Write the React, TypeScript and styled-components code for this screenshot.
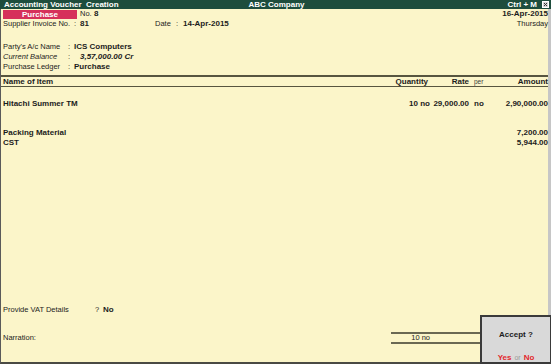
import styled, { createGlobalStyle } from 'styled-components';

const GlobalStyle = createGlobalStyle`
  html, body {
    margin: 0;
    padding: 0;
    background: #fbf5c9;
  }
  body {
    font-family: "Liberation Sans", Arial, sans-serif;
    font-size: 7.5px;
    color: #1c1c1c;
  }
`;

const Screen = styled.div`
  position: relative;
  width: 551px;
  height: 364px;
  display: flex;
  flex-direction: column;
  overflow: hidden;
  background: #fbf5c9;
`;

const TitleBar = styled.div`
  height: 9px;
  line-height: 9px;
  background: #1e4d3d;
  color: #ffffff;
  font-weight: bold;
  font-size: 8px;
  display: grid;
  grid-template-columns: 1fr auto 1fr;
  align-items: center;
  padding: 0 2px 0 4px;
  white-space: pre;
`;

const TitleRight = styled.div`
  justify-self: end;
  display: flex;
  align-items: center;
  gap: 5px;
`;

const Body = styled.div`
  flex: 1;
  display: flex;
  flex-direction: column;
  border-left: 1px solid #5a5a5a;
  border-right: 3px solid #c6c6c6;
  border-bottom: 2px solid #4a4a44;
`;

const Head = styled.div`
  display: flex;
  justify-content: space-between;
  padding-left: 2px;
  margin-bottom: 3px;
`;

const HeadLeft = styled.div`
  display: flex;
  flex-direction: column;
`;

const HeadRight = styled.div`
  display: flex;
  flex-direction: column;
  align-items: flex-end;
`;

const Row = styled.div<{ $top?: number }>`
  height: 10px;
  line-height: 10px;
  display: flex;
  align-items: center;
  margin-top: ${(p) => p.$top || 0}px;
  white-space: nowrap;
`;

const Badge = styled.div`
  width: 74px;
  height: 9px;
  line-height: 9px;
  background: #d6305b;
  color: #ffffff;
  font-weight: bold;
  font-size: 8px;
  text-align: center;
  margin-right: 3px;
`;

const Label = styled.span<{ $w?: number; $italic?: boolean }>`
  display: inline-block;
  width: ${(p) => (p.$w ? `${p.$w}px` : 'auto')};
  font-style: ${(p) => (p.$italic ? 'italic' : 'normal')};
`;

const Colon = styled.span<{ $w?: number }>`
  display: inline-block;
  width: ${(p) => p.$w || 6}px;
`;

const Strong = styled.span<{ $italic?: boolean; $indent?: number }>`
  font-weight: bold;
  font-size: 8px;
  font-style: ${(p) => (p.$italic ? 'italic' : 'normal')};
  margin-left: ${(p) => p.$indent || 0}px;
`;

const Block = styled.div<{ $w: number }>`
  width: ${(p) => p.$w}px;
  display: flex;
  align-items: center;
`;

const ItemGrid = styled.div`
  display: grid;
  grid-template-columns: 1fr 39px 39px 25px 54px;
  padding-left: 2px;
  height: 10px;
  line-height: 10px;
  align-items: center;
  white-space: nowrap;
`;

const HeaderGrid = styled(ItemGrid)`
  height: 9px;
  line-height: 9px;
  border-top: 2px solid #57553f;
  border-bottom: 1px solid #57553f;
  font-weight: bold;
  font-size: 8px;
`;

const ItemRow = styled(ItemGrid)<{ $top?: number }>`
  margin-top: ${(p) => p.$top || 0}px;
  font-weight: bold;
  font-size: 8px;
`;

const Cell = styled.div<{ $align?: 'left' | 'right'; $pad?: number }>`
  text-align: ${(p) => p.$align || 'left'};
  padding-right: ${(p) => p.$pad || 0}px;
`;

const PerCell = styled.div<{ $small?: boolean }>`
  padding-left: 5px;
  font-size: ${(p) => (p.$small ? '6.5px' : '8px')};
  font-weight: ${(p) => (p.$small ? 'normal' : 'bold')};
  color: ${(p) => (p.$small ? '#3a3a3a' : 'inherit')};
`;

const Spacer = styled.div`
  flex: 1;
`;

const Footer = styled.div`
  display: flex;
  flex-direction: column;
  padding-bottom: 18px;
`;

const VatRow = styled.div`
  height: 10px;
  line-height: 10px;
  padding-left: 2px;
  display: flex;
  align-items: center;
  margin-bottom: 17px;
`;

const NarrationGrid = styled(ItemGrid)`
  height: 12px;
  line-height: 12px;
`;

const TotalsBand = styled.div`
  grid-column: 2 / -1;
  height: 8px;
  line-height: 8px;
  border-top: 2px solid #6a6852;
  border-bottom: 2px solid #6a6852;
  display: grid;
  grid-template-columns: 39px 1fr;
`;

const AcceptBox = styled.div`
  position: absolute;
  right: 0;
  bottom: 0;
  width: 68px;
  height: 32px;
  background: #d9d9d9;
  border: 2px solid #3a3a3a;
  border-right-width: 1px;
  display: flex;
  flex-direction: column;
  align-items: center;
  padding-top: 13px;
  box-sizing: content-box;
  font-weight: bold;
  font-size: 8px;
`;

const AcceptChoices = styled.div`
  margin-top: auto;
  margin-bottom: 0;
  display: flex;
  gap: 3px;
  align-items: baseline;
`;

const Choice = styled.span<{ $muted?: boolean }>`
  color: ${(p) => (p.$muted ? '#9a9a9a' : '#e3262c')};
  font-weight: ${(p) => (p.$muted ? 'normal' : 'bold')};
  font-size: ${(p) => (p.$muted ? '7px' : '8px')};
`;

const CloseIcon = () => (
  <svg width="7" height="7" viewBox="0 0 7 7">
    <rect x="0.5" y="0.5" width="6" height="6" fill="#d6d6d6" stroke="#ffffff" />
    <path d="M2 2 L5 5 M5 2 L2 5" stroke="#333" strokeWidth="1" />
  </svg>
);

export default function App() {
  return (
    <>
      <GlobalStyle />
      <Screen>
        <TitleBar>
          <span>Accounting Voucher  Creation</span>
          <span>ABC Company</span>
          <TitleRight>
            <span>Ctrl + M</span>
            <CloseIcon />
          </TitleRight>
        </TitleBar>
        <Body>
          <Head>
            <HeadLeft>
              <Row>
                <Badge>Purchase</Badge>
                <Label $w={14}>No.</Label>
                <Strong>8</Strong>
              </Row>
              <Row>
                <Block $w={152}>
                  <Label $w={71}>Supplier Invoice No.</Label>
                  <Colon>:</Colon>
                  <Strong>81</Strong>
                </Block>
                <Label $w={21}>Date</Label>
                <Colon $w={7}>:</Colon>
                <Strong>14-Apr-2015</Strong>
              </Row>
              <Row $top={13}>
                <Label $w={65}>Party's A/c Name</Label>
                <Colon>:</Colon>
                <Strong>ICS Computers</Strong>
              </Row>
              <Row>
                <Label $w={65} $italic>
                  Current Balance
                </Label>
                <Colon>:</Colon>
                <Strong $italic $indent={6}>
                  3,57,000.00 Cr
                </Strong>
              </Row>
              <Row>
                <Label $w={65}>Purchase Ledger</Label>
                <Colon>:</Colon>
                <Strong>Purchase</Strong>
              </Row>
            </HeadLeft>
            <HeadRight>
              <Row>
                <Strong>16-Apr-2015</Strong>
              </Row>
              <Row>Thursday</Row>
            </HeadRight>
          </Head>

          <HeaderGrid>
            <Cell>Name of Item</Cell>
            <Cell $align="right" $pad={2}>
              Quantity
            </Cell>
            <Cell $align="right">Rate</Cell>
            <PerCell $small>per</PerCell>
            <Cell $align="right">Amount</Cell>
          </HeaderGrid>

          <ItemRow $top={12}>
            <Cell>Hitachi Summer TM</Cell>
            <Cell $align="right">10 no</Cell>
            <Cell $align="right">29,000.00</Cell>
            <PerCell>no</PerCell>
            <Cell $align="right">2,90,000.00</Cell>
          </ItemRow>
          <ItemRow $top={19}>
            <Cell>Packing Material</Cell>
            <Cell />
            <Cell />
            <Cell />
            <Cell $align="right">7,200.00</Cell>
          </ItemRow>
          <ItemRow>
            <Cell>CST</Cell>
            <Cell />
            <Cell />
            <Cell />
            <Cell $align="right">5,944.00</Cell>
          </ItemRow>

          <Spacer />

          <Footer>
            <VatRow>
              <Label $w={92}>Provide VAT Details</Label>
              <Label $w={8}>?</Label>
              <Strong>No</Strong>
            </VatRow>
            <NarrationGrid>
              <Cell>Narration:</Cell>
              <TotalsBand>
                <Cell $align="right">10 no</Cell>
              </TotalsBand>
            </NarrationGrid>
          </Footer>
        </Body>

        <AcceptBox>
          <span>Accept ?</span>
          <AcceptChoices>
            <Choice>Yes</Choice>
            <Choice $muted>or</Choice>
            <Choice>No</Choice>
          </AcceptChoices>
        </AcceptBox>
      </Screen>
    </>
  );
}
